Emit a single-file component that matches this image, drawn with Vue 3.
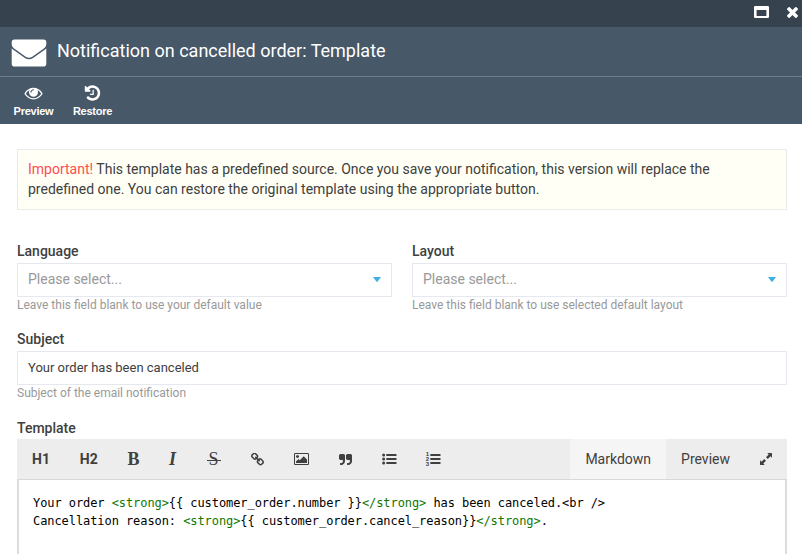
<script setup>
const selects = [
  { label: 'Language', hint: 'Leave this field blank to use your default value' },
  { label: 'Layout', hint: 'Leave this field blank to use selected default layout' },
]
const lines = [
  [['Your order '], ['<strong>', 'tag'], ['{{ customer_order.number }}'], ['</strong>', 'tag'], [' has been canceled.<br />']],
  [['Cancellation reason: '], ['<strong>', 'tag'], ['{{ customer_order.cancel_reason}}'], ['</strong>', 'tag'], ['.']],
]
</script>

<template>
  <div class="window">
    <div class="titlebar">
      <svg class="maximize" viewBox="0 0 15 12"><path fill-rule="evenodd" d="M1.2 0H13.8Q15 0 15 1.2V10.8Q15 12 13.8 12H1.2Q0 12 0 10.8V1.2Q0 0 1.2 0ZM2.6 4V10H12.4V4Z" /></svg>
      <svg class="close" viewBox="302 238 1188 1188"><path d="M1490 1322q0 40-28 68l-136 136q-28 28-68 28t-68-28l-294-294-294 294q-28 28-68 28t-68-28l-136-136q-28-28-28-68t28-68l294-294-294-294q-28-28-28-68t28-68l136-136q28-28 68-28t68 28l294 294 294-294q28-28 68-28t68 28l136 136q28 28 28 68t-28 68l-294 294 294 294q28 28 28 68z" transform="translate(0 -128)" /></svg>
    </div>
    <header class="heading">
      <svg class="envelope" viewBox="0 0 36 28"><path d="M3.5.5H32.5Q35.3.5 35.3 3.3V5.5Q35.3 7.6 33.2 9.2L21.3 17.7Q18 19.8 14.7 17.7L2.8 9.2Q.7 7.6.7 5.5V3.3Q.7.5 3.5.5ZM.7 9.2Q1.2 9.9 2 10.5L13.9 19Q18 21.7 22.1 19L34 10.5Q34.8 9.9 35.3 9.2V24.7Q35.3 27.5 32.5 27.5H3.5Q.7 27.5.7 24.7Z" /></svg>
      <h1>Notification on cancelled order: Template</h1>
    </header>
    <nav class="actions">
      <div class="action preview">
        <svg viewBox="0 0 1792 1792"><path d="M1664 960q-152-236-381-353 61 104 61 225 0 185-131.5 316.5t-316.5 131.5-316.5-131.5-131.5-316.5q0-121 61-225-229 117-381 353 133 205 333.5 326.5t434.5 121.5 434.5-121.5 333.5-326.5zm-720-384q0-20-14-34t-34-14q-125 0-214.5 89.5t-89.5 214.5q0 20 14 34t34 14 34-14 14-34q0-86 61-147t147-61q20 0 34-14t14-34zm848 384q0 34-20 69-140 230-376.5 368.5t-499.5 138.5-499.5-139-376.5-368q-20-35-20-69t20-69q140-229 376.5-368t499.5-139 499.5 139 376.5 368q20 35 20 69z" /></svg>
        <span>Preview</span>
      </div>
      <div class="action restore">
        <svg viewBox="0 0 1792 1792"><path d="M1664 896q0 156-61 298t-164 245-245 164-298 61q-172 0-327-72.5t-264-204.5q-7-10-6.5-22.5t8.5-20.5l137-138q10-9 25-9 16 2 23 12 73 95 179 147t225 52q104 0 198.5-40.5t163.5-109.5 109.5-163.5 40.5-198.5-40.5-198.5-109.5-163.5-163.5-109.5-198.5-40.5q-98 0-188 35.5t-160 101.5l137 138q31 30 14 69-17 40-59 40h-448q-26 0-45-19t-19-45v-448q0-42 40-59 39-17 69 14l130 129q107-101 244.5-156.5t284.5-55.5q156 0 298 61t245 164 164 245 61 298zm-640-288v448q0 14-9 23t-23 9h-320q-14 0-23-9t-9-23v-64q0-14 9-23t23-9h224v-352q0-14 9-23t23-9h64q14 0 23 9t9 23z" /></svg>
        <span>Restore</span>
      </div>
    </nav>
    <main>
      <p class="notice"><span class="important">Important!</span> This template has a predefined source. Once you save your notification, this version will replace the<br />predefined one. You can restore the original template using the appropriate button.</p>
      <div class="row">
        <div v-for="s in selects" :key="s.label" class="field">
          <label>{{ s.label }}</label>
          <div class="control select"><span>Please select...</span><svg viewBox="0 0 8 5"><path d="M0 0H8L4.6 4.6Q4 5.2 3.4 4.6Z" /></svg></div>
          <small>{{ s.hint }}</small>
        </div>
      </div>
      <div class="field subject">
        <label>Subject</label>
        <div class="control value"><span>Your order has been canceled</span></div>
        <small>Subject of the email notification</small>
      </div>
      <div class="field template">
        <label>Template</label>
        <div class="toolbar">
          <div class="tools">
            <span class="tool h">H1</span>
            <span class="tool h">H2</span>
            <span class="tool b">B</span>
            <span class="tool i">I</span>
            <span class="tool s"><span>S</span></span>
            <span class="tool t-link"><svg class="link" viewBox="80 80 1632 1632"><path d="M1520 1216q0-40-28-68l-208-208q-28-28-68-28-42 0-72 32 3 3 19 18.5t21.5 21.5 15 19 13 25.5 3.5 27.5q0 40-28 68t-68 28q-15 0-27.5-3.5t-25.5-13-19-15-21.5-21.5-18.5-19q-33 31-33 73 0 40 28 68l206 207q27 27 68 27 40 0 68-26l147-146q28-28 28-67zm-703-705q0-40-28-68l-206-207q-28-28-68-28-39 0-68 27l-147 146q-28 28-28 67 0 40 28 68l208 208q27 27 68 27 42 0 72-31-3-3-19-18.5t-21.5-21.5-15-19-13-25.5-3.5-27.5q0-40 28-68t68-28q15 0 27.5 3.5t25.5 13 19 15 21.5 21.5 18.5 19q33-31 33-73zm895 705q0 120-85 203l-147 146q-83 83-203 83-121 0-204-85l-206-207q-83-83-83-203 0-123 88-209l-88-88q-86 88-208 88-120 0-204-84l-208-208q-84-84-84-204t85-203l147-146q83-83 203-83 121 0 204 85l206 207q83 83 83 203 0 123-88 209l88 88q86-88 208-88 120 0 204 84l208 208q84 84 84 204z" /></svg></span>
            <span class="tool"><svg class="image" viewBox="-64 128 1920 1536"><path d="M576 576q0 80-56 136t-136 56-136-56-56-136 56-136 136-56 136 56 56 136zm1024 384v448h-1408v-192l320-320 160 160 512-512zm96-704h-1600q-13 0-22.5 9.5t-9.5 22.5v1216q0 13 9.5 22.5t22.5 9.5h1600q13 0 22.5-9.5t9.5-22.5v-1216q0-13-9.5-22.5t-22.5-9.5zm160 32v1216q0 66-47 113t-113 47h-1600q-66 0-113-47t-47-113v-1216q0-66 47-113t113-47h1600q66 0 113 47t47 113z" /></svg></span>
            <span class="tool t-quote"><svg class="quote" viewBox="64 128 1664 1408"><path v-for="x in [0, 896]" :key="x" :transform="`translate(${x} 0)`" d="M832 320v704q0 104-40.5 198.5t-109.5 163.5-163.5 109.5-198.5 40.5h-64q-26 0-45-19t-19-45v-128q0-26 19-45t45-19h64q106 0 181-75t75-181v-32q0-40-28-68t-68-28h-224q-80 0-136-56t-56-136v-384q0-80 56-136t136-56h384q80 0 136 56t56 136z" /></svg></span>
            <span class="tool"><svg class="ul" viewBox="0 0 15 12"><g v-for="y in [2, 6, 10]" :key="y"><circle cx="1.6" :cy="y" r="1.5" /><rect x="4.3" :y="y - 1" width="10.2" height="2" rx=".3" /></g></svg></span>
            <span class="tool"><svg class="ol" viewBox="0 0 15 14"><g v-for="(y, n) in [3, 7, 11]" :key="y"><text x="-.3" :y="7 + (n - 1) * 4.7 + 2">{{ n + 1 }}</text><rect x="4.3" :y="y - 1" width="10.2" height="2" rx=".3" /></g></svg></span>
          </div>
          <span class="tab active">Markdown</span>
          <span class="tab">Preview</span>
          <span class="expand"><svg viewBox="0 0 12 12"><path d="M7.2 0H11.5Q12 0 12 .5V4.8L10.5 3.3L7.8 6L6 4.2L8.7 1.5ZM4.8 12H.5Q0 12 0 11.5V7.2L1.5 8.7L4.2 6L6 7.8L3.3 10.5Z" /></svg></span>
        </div>
        <div class="editor">
          <div v-for="(line, i) in lines" :key="i" class="line"><span v-for="(part, j) in line" :key="j" :class="part[1]">{{ part[0] }}</span></div>
        </div>
      </div>
    </main>
  </div>
</template>

<style>
body { background: #fff; overflow: hidden; }
</style>

<style scoped>
* { box-sizing: border-box; }
.window { height: 554px; overflow: hidden; font: 14px/20px Roboto, "Liberation Sans", sans-serif; color: #404040; }
svg { display: block; fill: currentColor; }
.titlebar { height: 27px; padding: 6px 4.5px 0 0; background: #36434f; color: #fff; display: flex; justify-content: flex-end; gap: 17.5px; }
.maximize { width: 15px; height: 12px; }
.close { width: 11px; height: 11px; margin-top: .5px; overflow: visible; }
.heading { height: 50px; padding-left: 11px; background: #475869; border-bottom: 1px solid #6d7d8c; display: flex; align-items: flex-start; color: #fff; }
.envelope { width: 36px; height: 28px; margin-top: 12px; }
h1 { margin: 14px 0 0 10px; font-size: 18px; line-height: 20px; font-weight: 400; white-space: nowrap; }
.actions { height: 47px; background: #475869; color: #fff; display: flex; padding: 7px 0 0 13px; gap: 19px; }
.action { width: 41px; display: flex; flex-direction: column; align-items: center; font: 700 11px/14px "Liberation Sans", sans-serif; }
.restore { margin-left: -1px; }
.action svg { width: 19px; height: 18px; margin-bottom: 2px; }
.action span { letter-spacing: -.25px; }
main { padding: 25px 15px 0 17px; }
.notice { margin: 0; height: 61px; border: 1px solid #ebebe9; background: #fffff5; padding: 9px 10px; white-space: nowrap; }
.important { color: #ff4c50; }
.row { display: flex; gap: 20px; margin-top: 31px; }
.field { display: flex; flex-direction: column; flex: 1; }
label { font-weight: 500; height: 22px; line-height: 21px; }
.control { height: 34px; border: 1px solid #e6e8f0; display: flex; align-items: center; justify-content: space-between; padding: 0 10px; }
.select { color: #999; }
.select span { line-height: 18px; padding-bottom: 2px; }
.select svg { width: 8px; height: 5px; margin-bottom: 1px; color: #3eaee4; }
.value { font-size: 13px; }
small { font-size: 12px; line-height: 16px; color: #999; }
.subject { margin-top: 16px; }
.template { margin-top: 17px; }
.template label { height: 21px; }
.toolbar { height: 41px; border-bottom: 1px solid #d8d8d8; background: #ededed; display: flex; align-items: center; }
.tools { flex: 1; display: flex; align-items: center; padding-left: 15px; }
.tool { width: 43.8px; height: 20px; display: flex; align-items: center; justify-content: flex-start; }
.h { width: 47.8px; font-weight: 700; }
.b, .i, .s { font-family: "Liberation Serif", serif; font-size: 18px; font-weight: 700; }
.b { width: 41px; }
.i { width: 38px; font-style: italic; padding-left: .5px; }
.s { font-weight: 400; }
.s span { padding: 0 2px; background: linear-gradient(currentColor, currentColor) 0 11px / 100% 1px no-repeat; }
.t-link, .t-quote { padding-left: 1px; }
.link { width: 13px; height: 13px; }
.image { width: 15px; height: 12px; }
.quote { width: 13px; height: 11px; }
.ul { width: 15px; height: 12px; }
.ol { width: 15px; height: 14px; overflow: visible; }
.ol text { font: 700 6px "Liberation Sans", sans-serif; }
.tab { height: 40px; line-height: 40px; padding: 0 15px; }
.active { background: #f5f5f5; }
.expand { padding: 0 15px; }
.expand svg { width: 12px; height: 12px; }
.editor { height: 100px; border: solid #dcdcdc; border-width: 0 2px; padding: 14px 14px; font: 12px/18px "DejaVu Sans Mono", monospace; letter-spacing: -.075px; color: #000; }
.line { white-space: pre; }
.tag { color: #170; }
</style>
